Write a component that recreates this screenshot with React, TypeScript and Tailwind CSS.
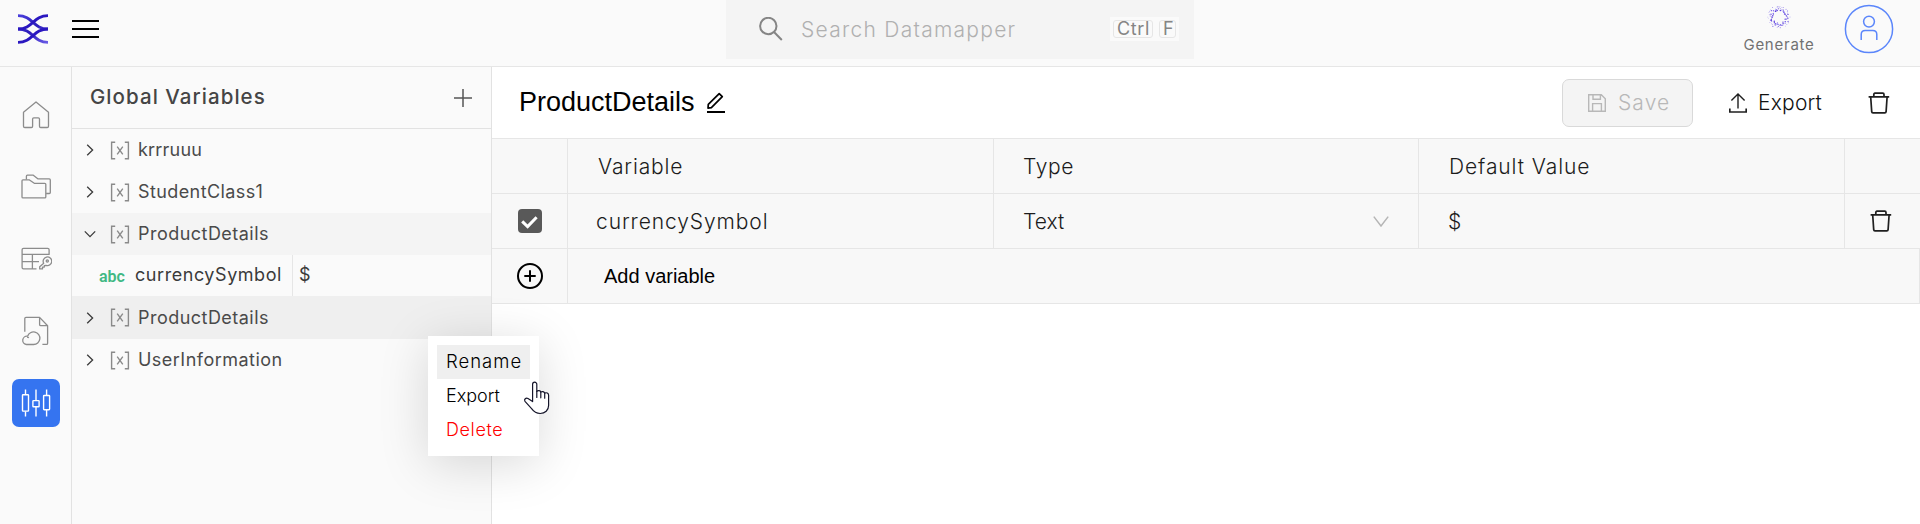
import React from "react";

type IconProps = { className?: string };

const Logo = () => (
  <svg className="size-[30px]" viewBox="0 0 30 30" fill="none" strokeWidth="2.9">
    <defs>
      <linearGradient id="strand" x1="0" y1="0" x2="1" y2="1">
        <stop offset="0" stopColor="#4a3fdc" />
        <stop offset="0.5" stopColor="#2c1dbb" />
        <stop offset="1" stopColor="#6a5ce6" />
      </linearGradient>
    </defs>
    <path stroke="url(#strand)" d="M0 1.6C15 1.6 15 15 30 15M0 15C15 15 15 28.4 30 28.4" />
    <path stroke="#2a17c0" d="M30 1.6C15 1.6 15 15 0 15M30 15C15 15 15 28.4 0 28.4" />
  </svg>
);

const HomeIcon = () => (
  <svg className="h-7 w-[30px]" viewBox="21 101 30 28" fill="none" stroke="#8c8c8c" strokeWidth="1.3" strokeLinejoin="round">
    <path d="M36 101.9 48.5 112.3V126.2q0 1.3-1.3 1.3H40.7q-1.2 0-1.2-1.2V119q0-1.2-1.2-1.2H33.8q-1.2 0-1.2 1.2V126.3q0 1.2-1.2 1.2H24.8q-1.3 0-1.3-1.3V112.3Z" />
  </svg>
);

const FoldersIcon = () => (
  <svg className="h-[25px] w-8" viewBox="20.5 174.5 32 25" fill="none" stroke="#8c8c8c" strokeWidth="1.3" strokeLinejoin="round">
    <path d="M26.9 180V176.7q0-1 1-1H33.8L38.6 179.4H49.8q1 0 1 1V193q0 1-1 1H46.6" />
    <path d="M23.5 180.3H29.6L34.8 183.8H45.3q1 0 1 1V197.4q0 1-1 1H23.5q-1 0-1-1V181.3q0-1 1-1Z" />
  </svg>
);

const TableKeyIcon = () => (
  <svg className="h-6 w-8" viewBox="20.5 247.5 32 24" fill="none" stroke="#8c8c8c" strokeWidth="1.3" strokeLinejoin="round">
    <path d="M37 269.4H24q-1.4 0-1.4-1.4V250.2q0-1.4 1.4-1.4H48.2q1.4 0 1.4 1.4V254.9H22.6M22.6 262.2H39.5M32.9 255V269.4" />
    <path d="M44.2 263.8A4.3 4.3 0 1 1 46.6 265.8L44.8 266.2V267.6H43V269.4H40.2V267.2Z" />
    <circle cx="47.8" cy="261.5" r="1.1" />
  </svg>
);

const CloudFileIcon = () => (
  <svg className="h-[30px] w-8" viewBox="20 316 32 30" fill="none" stroke="#8c8c8c" strokeWidth="1.3" strokeLinejoin="round">
    <path d="M24.8 331.8V318.6q0-1.2 1.2-1.2H39.6L47.6 325.7V343.2q0 1.2-1.2 1.2H42.4M39.6 317.4V324.5q0 1.2 1.2 1.2H47.6" />
    <path d="M26.3 344.5H33.5A6.3 6.3 0 1 0 27.6 336.2 4.2 4.2 0 0 0 26.3 344.5" />
    <path d="M27 337.2q1.2 0 1.9.5" />
  </svg>
);

const SlidersIcon = () => (
  <svg className="h-7 w-[30px]" viewBox="21 388.5 30 28" fill="none" stroke="#fff" strokeWidth="1.4">
    <rect x="22.5" y="394.2" width="6" height="16.4" rx="0.6" />
    <rect x="32.9" y="400.1" width="6.2" height="6.2" rx="0.6" />
    <rect x="43.6" y="395" width="6" height="14.2" rx="0.6" />
    <path d="M25.5 389V394M25.5 411V416M36 389V400M36 406.4V416M46.6 389V395M46.6 409.3V416" />
  </svg>
);

const GenerateIcon = () => {
  const dots: React.ReactNode[] = [];
  let seed = 7;
  const next = () => (seed = (seed * 16807) % 2147483647) / 2147483647;
  for (let i = 0; i < 90; i++) {
    const a = (i / 90) * Math.PI * 2 + next() * 0.08;
    const spread = next();
    const r = 6.2 + spread * 5.2;
    const s = 0.8 - spread * 0.35 - next() * 0.2;
    dots.push(<circle key={i} cx={12 + r * Math.cos(a)} cy={12 + r * Math.sin(a)} r={s} fill={next() < 0.3 ? "#8a7cf0" : "#5638dd"} />);
  }
  return <svg className="size-6" viewBox="0 0 24 24">{dots}</svg>;
};

const Trash = ({ className }: IconProps) => (
  <svg className={className} viewBox="0 0 22 22" fill="none" stroke="#1f1f1f" strokeWidth="1.7" strokeLinejoin="round">
    <path d="M0.6 4.8H21.2M5.8 4.6V2.4q0-1.2 1.2-1.2H14.8q1.2 0 1.2 1.2V4.6" />
    <path d="M2.7 5 3.7 19.6q.1 1.2 1.3 1.2H16.8q1.2 0 1.3-1.2L19.1 5" />
  </svg>
);

const Bracket = () => (
  <svg className="h-[19px] w-5 shrink-0" viewBox="0 0 20 19" fill="none" stroke="#8a8a8a" strokeWidth="1.4">
    <path d="M5.2 1.2H1.6V17.8H5.2M14.8 1.2H18.4V17.8H14.8M7.2 5.6 12.8 13.4M12.8 5.6 7.2 13.4" />
  </svg>
);

const Chevron = ({ open }: { open?: boolean }) => (
  <svg className="size-3 shrink-0" viewBox="0 0 12 12" fill="none" stroke="#3a3a3a" strokeWidth="1.3">
    <path d={open ? "M0.8 3.4 6 8.6 11.2 3.4" : "M3.2 0.8 8.6 6 3.2 11.2"} />
  </svg>
);

function TreeRow({ name, open, className, text }: { name: string; open?: boolean; className: string; text: string }) {
  return (
    <div className={`flex items-center pl-3 ${className}`}>
      <Chevron open={open} />
      <div className="ml-[14px] flex"><Bracket /></div>
      <span className={`ml-2 pb-px text-[18px] text-[#4a4a4a] ${text}`}>{name}</span>
    </div>
  );
}

function Header() {
  return (
    <header className="flex h-[67px] shrink-0 border-b border-[#e6e6e6] bg-[#fafafa]">
      <div className="flex w-[726px] pl-[18px] pt-[14px]">
        <Logo />
        <div className="ml-6 mt-[6px] flex h-[18px] w-[27px] flex-col justify-between">
          <i className="h-[2px] bg-black" /><i className="h-[2px] bg-black" /><i className="h-[2px] bg-black" />
        </div>
      </div>
      <div className="flex h-[59px] w-[468px] items-start bg-[#f4f4f4] pl-[33px]">
        <svg className="mt-[17px] size-6" viewBox="0 0 24 24" fill="none" stroke="#858585" strokeWidth="2">
          <circle cx="9.3" cy="9" r="8.2" /><path d="M15 15 22.8 23" />
        </svg>
        <span className="ml-[18px] mt-[14px] w-[309px] text-[21px] font-light leading-[31px] tracking-[1.27px] text-[#b0b0b0]">Search Datamapper</span>
        <div className="mt-[17px] flex h-6 w-[69px] items-center gap-[6px] bg-[#fafafa] pl-[3px] text-[18px] leading-4 text-[#858585]">
          <kbd className="h-[18px] w-10 rounded-[3px] border border-[#e6e6e6] pl-[3px] font-['Inter',sans-serif] tracking-[0.6px]">Ctrl</kbd>
          <kbd className="h-[18px] w-[17px] rounded-[3px] border border-[#e6e6e6] pl-[3px] font-['Inter',sans-serif]">F</kbd>
        </div>
      </div>
      <div className="ml-[548px] flex w-[74px] flex-col items-center pt-[5px]">
        <GenerateIcon />
        <span className="mt-[5px] text-[15px] leading-[22px] tracking-[0.75px] text-[#717171]">Generate</span>
      </div>
      <svg className="ml-[28px] mt-[4px] size-[50px]" viewBox="0 0 50 50" fill="none" stroke="#5b86fb" strokeWidth="1.5">
        <circle cx="25" cy="25" r="23.6" />
        <circle cx="25" cy="17.6" r="5.4" />
        <path d="M17.2 36V30.5q0-4 4-4H28.8q4 0 4 4V36" />
      </svg>
    </header>
  );
}

function Rail() {
  return (
    <nav className="flex w-[72px] shrink-0 flex-col items-center border-r border-[#e2e2e2] bg-[#fafafa] pt-[34px]">
      <HomeIcon />
      <div className="mt-[45px]"><FoldersIcon /></div>
      <div className="mt-12"><TableKeyIcon /></div>
      <div className="mt-[45px]"><CloudFileIcon /></div>
      <div className="mt-[33px] flex size-12 items-center justify-center rounded-[7px] bg-[#3574f0]"><SlidersIcon /></div>
    </nav>
  );
}

function Tree() {
  return (
    <aside className="w-[420px] shrink-0 border-r border-[#e2e2e2] bg-[#fafafa]">
      <div className="flex h-[62px] items-center justify-between border-b border-[#e2e2e2] pl-[18px] pr-[19px]">
        <h2 className="text-[20.5px] font-medium tracking-[1.05px] text-[#454545]">Global Variables</h2>
        <svg className="size-[18px]" viewBox="0 0 18 18" stroke="#555" strokeWidth="1.5"><path d="M9 0V18M0 9H18" /></svg>
      </div>
      <TreeRow name="krrruuu" className="h-[42px]" text="tracking-[0.2px]" />
      <TreeRow name="StudentClass1" className="h-[42px]" text="tracking-[0.4px]" />
      <TreeRow name="ProductDetails" open className="h-[42px] bg-[#f4f4f4]" text="tracking-[0.47px]" />
      <div className="flex h-[41px] text-[18px] leading-[39px] text-[#3a3a3a]">
        <div className="flex w-[221px] border-r border-[#e6e6e6] pl-[27px]">
          <span className="w-9 font-['Roboto',sans-serif] text-[16px] font-semibold leading-[43px] -tracking-[0.1px] text-[#41b883]">abc</span>
          <span className="tracking-[0.55px]">currencySymbol</span>
        </div>
        <span className="pl-[6px]">$</span>
      </div>
      <TreeRow name="ProductDetails" className="h-[43px] bg-[#efefef]" text="tracking-[0.47px]" />
      <TreeRow name="UserInformation" className="h-[42px]" text="tracking-[0.48px]" />
    </aside>
  );
}

function Toolbar() {
  return (
    <div className="flex h-[71px] items-start pl-[27px]">
      <h1 className="mt-[15px] font-['Liberation_Sans',sans-serif] text-[27px] leading-10 text-black">ProductDetails</h1>
      <svg className="ml-3 mt-[25px] h-[21px] w-[19px]" viewBox="0 0 19 21" fill="none" stroke="#000" strokeWidth="1.7">
        <path d="M1.3 12.4 12.2 1.6 15.3 4.7 4.4 15.6 1 16.2Z" strokeLinejoin="round" /><path strokeWidth="2" d="M0 20H18" />
      </svg>
      <button className="ml-auto mt-3 flex h-12 w-[131px] items-center rounded-[7px] border border-[#d9d9d9] bg-[#f4f4f4] pl-[25px]">
        <svg className="size-[18px]" viewBox="0 0 18 18" fill="none" stroke="#b8b8b8" strokeWidth="1.4">
          <path d="M.7.7H13.3L17.3 4.7V17.3H.7ZM5 .7V5.3H12.4V.7M4.6 17.3V9.6H13.4V17.3" />
        </svg>
        <span className="ml-3 text-[21px] font-light tracking-[1.1px] text-[#b8b8b8]">Save</span>
      </button>
      <button className="ml-9 mt-3 flex h-12 w-[94px] items-center">
        <svg className="h-5 w-[18px]" viewBox="0 0 18 20" fill="none" stroke="#1f1f1f" strokeWidth="1.4">
          <path d="M9 15.5V1.2M2.4 7.4 9 1 15.6 7.4" /><path strokeWidth="1.7" d="M.8 15.5V19H17.2V15.5" />
        </svg>
        <span className="ml-[11px] text-[21px] font-light tracking-[0.2px] text-[#111]">Export</span>
      </button>
      <div className="ml-[45px] mr-[30px] mt-[25px]"><Trash className="size-[22px]" /></div>
    </div>
  );
}

const cell = "border-b border-r border-[#e6e6e6] flex items-center";

function VariablesTable() {
  return (
    <div className="grid grid-cols-[76px_426px_425px_426px_75px] grid-rows-[55px_55px_55px] border-t border-[#e6e6e6] bg-[#f8f8f8] text-[21px] font-light text-[#1c1c1c]">
      <div className={cell} />
      <div className={`${cell} pl-[30px] pt-[2px] tracking-[0.85px]`}>Variable</div>
      <div className={`${cell} pl-[29px] pt-[2px] tracking-[0.6px]`}>Type</div>
      <div className={`${cell} pl-[30px] pt-[2px] tracking-[0.9px]`}>Default Value</div>
      <div className="border-b border-[#e6e6e6]" />

      <div className={`${cell} pl-[26px]`}>
        <svg className="size-6 rounded bg-[#595959]" viewBox="0 0 24 24" fill="none" stroke="#fff" strokeWidth="3"><path d="M4.2 12.4 9.6 17.6 18.6 8.2" /></svg>
      </div>
      <div className={`${cell} pl-[28px] pt-[2px] tracking-[0.9px]`}>currencySymbol</div>
      <div className={`${cell} justify-between pl-[29px] pr-[29px]`}>
        <span className="pt-[2px]">Text</span>
        <svg className="h-[11px] w-4" viewBox="0 0 16 11" fill="none" stroke="#b5b5b5" strokeWidth="1.5"><path d="M.8.6 8 10 15.2.6" /></svg>
      </div>
      <div className={`${cell} pl-[29px] pt-[2px]`}>$</div>
      <div className="flex items-center border-b border-[#e6e6e6] pl-[25px]"><Trash className="size-[22px]" /></div>

      <div className={`${cell} pl-[25px]`}>
        <svg className="size-[26px]" viewBox="0 0 26 26" fill="none" stroke="#000" strokeWidth="2"><circle cx="13" cy="13" r="12" /><path d="M13 7.3V18.7M7.3 13H18.7" /></svg>
      </div>
      <div className={`${cell} col-span-4 pl-[36px] font-['Liberation_Sans',sans-serif] text-[20px] font-normal text-black`}>Add variable</div>
    </div>
  );
}

function ContextMenu() {
  return (
    <div className="absolute left-[428px] top-[336px] h-[120px] w-[111px] bg-white p-[9px] text-[18px] font-light leading-[34px] text-black shadow-[0_8px_50px_rgba(0,0,0,0.15)]">
      <div className="h-[34px] bg-[#efefef] pl-[9px] text-[18.5px] leading-[33px] tracking-[1px]">Rename</div>
      <div className="pl-[9px]">Export</div>
      <div className="pl-[9px] tracking-[0.6px] text-[#ff0000]">Delete</div>
      <svg className="absolute left-[95px] top-[45px] h-[34px] w-[27px]" viewBox="0 0 27 34" fill="#fff" stroke="#15152a" strokeWidth="1.2" strokeLinejoin="round" strokeLinecap="round">
        <path d="M9.6 20.6V3.3a2.1 2.1 0 0 1 4.2 0V10.4c1.2-1.3 3.6-.9 4 .7 1.3-1 3.4-.6 3.9 1 1.700-.9 3.900.1 3.900 2.200V24.500c0 4.600-3.600 8-8.400 8-4 0-6.600-2-8.600-4.800L2 20.400c-1.300-2 .9-4.100 3-2.900Z" />
        <path fill="none" d="M13.8 10.400V16.400M17.800 11.100V16.800M21.700 12.100V17.200" />
      </svg>
    </div>
  );
}

export default function App() {
  return (
    <div className="relative flex h-[524px] w-[1920px] flex-col overflow-hidden bg-white font-['Inter',sans-serif]">
      <Header />
      <div className="flex min-h-0 flex-1">
        <Rail />
        <Tree />
        <main className="flex-1">
          <Toolbar />
          <VariablesTable />
        </main>
      </div>
      <ContextMenu />
    </div>
  );
}
